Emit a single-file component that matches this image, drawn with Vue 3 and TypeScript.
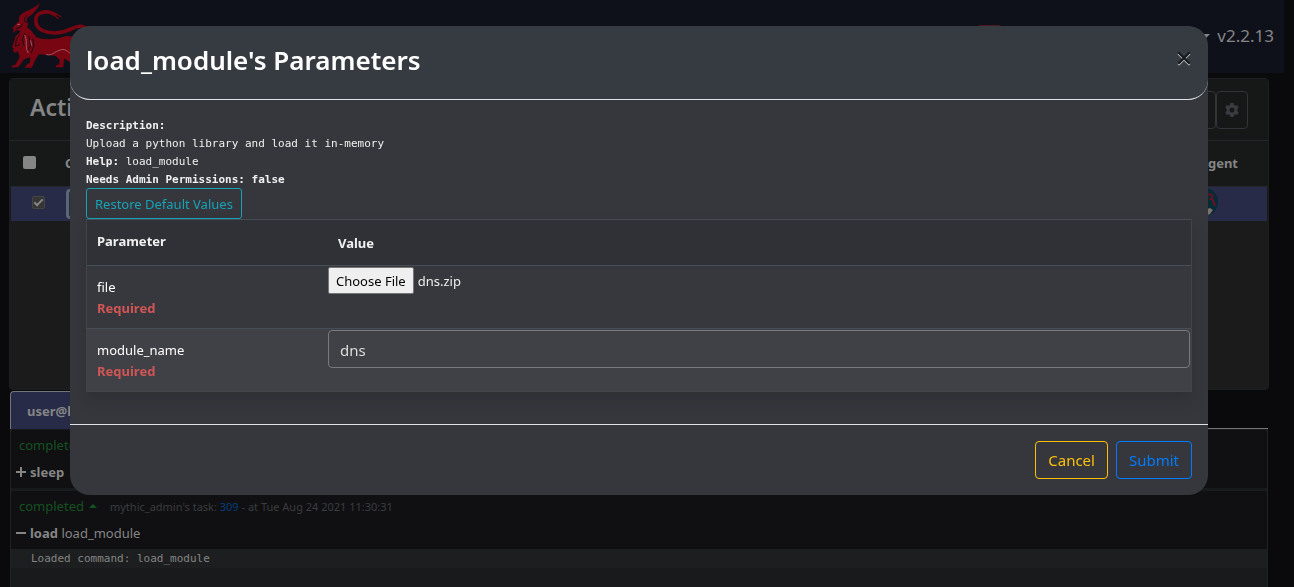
<script setup lang="ts">
import { onMounted, ref } from 'vue'

const fileInput = ref<HTMLInputElement | null>(null)
const moduleName = ref('dns')
const open = ref(true)
const allSelected = ref(false)
const rowSelected = ref(true)

function restoreDefaults(): void {
  moduleName.value = ''
  if (fileInput.value) fileInput.value.value = ''
}

onMounted(() => {
  const transfer = new DataTransfer()
  transfer.items.add(new File([''], 'dns.zip'))
  if (fileInput.value) fileInput.value.files = transfer.files
})
</script>

<template>
  <div class="page">
    <header class="navbar">
      <svg class="logo" viewBox="0 0 240 222" aria-hidden="true">
        <g fill="none" stroke="#780512" stroke-linecap="round">
          <path d="M245 96C228 74 212 76 192 86C160 102 126 102 104 92C78 80 76 44 100 38C114 34 130 37 140 43" stroke-width="11" />
          <path d="M128 38L145 42L158 50M140 46L151 56" stroke-width="4" />
        </g>
        <g fill="#780512">
          <path d="M38 70C28 58 32 46 46 38C66 29 86 20 95 9C91 30 72 43 54 50C47 53 45 59 49 66Z" />
          <path d="M43 66C38 52 42 45 55 41C72 36 80 30 84 24C80 40 66 48 57 53L56 67Z" />
          <path d="M13 84L30 66L44 62L61 70L57 82L69 91L85 112C110 121 142 118 164 111C178 105 190 109 211 113L208 157L184 164L168 176L166 202H143L144 196L154 193L155 179L143 168L110 164L91 163L82 176L71 201H52L57 194L66 188L67 172L48 178L32 200L10 203L12 197L22 194L35 172L30 154L22 158L14 152L18 147L12 141L17 127L23 108L34 99L38 92L25 91L15 98L17 88Z" />
          <path d="M74 158L92 163L82 180L71 203H50L57 194L67 187Z" />
          <path d="M164 156L192 164L205 184L224 199V205H202L193 191L166 174Z" />
        </g>
        <g fill="none" stroke="#160d17" stroke-width="3" stroke-linecap="round">
          <path d="M43 72L37 82L24 86M35 104L25 119L22 139L35 134M50 101L43 118L48 136M63 109L67 137L59 151M75 118L78 139L70 158" />
          <path d="M56 47C48 54 47 60 53 67" />
        </g>
        <g fill="none" stroke="#a25a63" stroke-width="3" stroke-linecap="round">
          <path d="M50 106C60 120 49 137 60 158M68 122L71 136M116 164C132 168 140 155 154 151C171 143 178 155 190 163M29 74L35 73" />
        </g>
      </svg>
      <span class="nav-badge"></span>
      <span class="caret"></span>
      <span class="version">v2.2.13</span>
    </header>

    <section class="card">
      <div class="card-head">
        <h1>Acti</h1>
        <div class="tools">
          <button type="button" aria-label="Filter"></button>
          <button type="button" aria-label="Settings">
            <svg viewBox="0 0 16 16" aria-hidden="true">
              <path fill="#393d42" fill-rule="evenodd" d="M6.4 1h3.2l.4 2 1.2.7 1.9-.7 1.6 2.8-1.5 1.3v1.8l1.5 1.3-1.6 2.8-1.9-.7-1.2.7-.4 2H6.400l-.4-2-1.200-.7-1.900.7-1.600-2.800 1.500-1.300V7.100L1.300 5.800 2.900 3l1.900.7L6 3zM8 5.500a2.500 2.500 0 1 0 0 5 2.500 2.500 0 0 0 0-5z" />
            </svg>
          </button>
        </div>
      </div>
      <div class="grid-row grid-head">
        <input v-model="allSelected" class="check" type="checkbox" aria-label="Select all callbacks" />
        <span class="col-name">C</span>
        <span class="col-agent">Agent</span>
      </div>
      <div class="grid-row grid-item">
        <input v-model="rowSelected" class="check" type="checkbox" aria-label="Select callback" />
        <span class="chip"></span>
        <svg class="avatar" viewBox="0 0 28 28" aria-hidden="true">
          <circle cx="14" cy="14" r="14" fill="#062a36" />
          <path d="M16 7c6-2 8 1 5 4 4 0 1 6 5 6" fill="none" stroke="#6b1222" stroke-width="2" />
          <path d="M15 22l5-2 3 2-3 4-5 2z" fill="#80706d" />
        </svg>
      </div>
    </section>

    <section class="console">
      <div class="tabs"><a href="#task" class="tab">user@host</a></div>
      <article class="task">
        <p class="status">completed</p>
        <p class="command"><svg viewBox="0 0 12 12" aria-hidden="true"><path d="M1 6H11M6 1V11" /></svg><b>sleep</b></p>
      </article>
      <article class="task">
        <p class="status">completed <i class="up"></i><small>mythic_admin's task: <a href="#309">309</a> - at Tue Aug 24 2021 11:30:31</small></p>
        <p class="command"><svg viewBox="0 0 12 12" aria-hidden="true"><path d="M1 6H11" /></svg><b>load</b> load_module</p>
      </article>
      <pre class="output">Loaded command: load_module</pre>
    </section>

    <div v-if="open" class="overlay">
      <form class="modal" role="dialog" aria-labelledby="dialog-title" @submit.prevent="open = false">
        <div class="modal-head">
          <h2 id="dialog-title">load_module's Parameters</h2>
          <button type="button" class="close" aria-label="Close" @click="open = false">
            <svg viewBox="0 0 14 14" aria-hidden="true">
              <path d="M2 3L12 13M12 3L2 13" stroke="#b5b8bb" />
              <path d="M2 2L12 12M12 2L2 12" stroke="#17191c" />
            </svg>
          </button>
        </div>
        <div class="modal-body">
          <div class="description">
            <div><b>Description:</b></div>
            <div>Upload a python library and load it in-memory</div>
            <div><b>Help:</b> load_module</div>
            <div><b>Needs Admin Permissions: false</b></div>
          </div>
          <button type="button" class="restore" @click="restoreDefaults">Restore Default Values</button>
          <table>
            <thead>
              <tr><th class="first">Parameter</th><th class="value">Value</th></tr>
            </thead>
            <tbody>
              <tr>
                <td class="first"><label for="file">file</label><strong>Required</strong></td>
                <td><input id="file" ref="fileInput" class="file" type="file" /></td>
              </tr>
              <tr class="alt">
                <td class="first"><label for="module-name">module_name</label><strong>Required</strong></td>
                <td><input id="module-name" v-model="moduleName" class="text" type="text" /></td>
              </tr>
            </tbody>
          </table>
        </div>
        <div class="modal-foot">
          <button type="button" class="cancel" @click="open = false">Cancel</button>
          <button type="submit" class="submit">Submit</button>
        </div>
      </form>
    </div>
  </div>
</template>

<style>
body {
  margin: 0;
  background: #0a0a0c;
}
</style>

<style scoped>
* {
  box-sizing: border-box;
}
.page {
  display: flex;
  flex-direction: column;
  height: 100vh;
  overflow: hidden;
  font: 13px/21px 'Noto Sans', 'Open Sans', sans-serif;
  color: #858585;
}
h1, h2, p, pre {
  margin: 0;
}
button, input {
  font-family: inherit;
}
button {
  cursor: pointer;
}
.navbar {
  display: flex;
  align-items: center;
  height: 73px;
  margin-right: 10px;
  padding: 0 10px 0 8px;
  background: #0f111a;
  flex-shrink: 0;
}
.logo {
  width: 80px;
  height: 74px;
  margin-right: auto;
}
.nav-badge {
  width: 25px;
  height: 24px;
  margin-right: 198px;
  border-radius: 4px;
  background: #4e1820;
}
.caret {
  border: 5px solid transparent;
  border-top-color: #858585;
  border-bottom: 0;
  margin-right: 7px;
}
.version {
  font-size: 17px;
  line-height: 24px;
  padding-bottom: 2px;
}
.card {
  flex-shrink: 0;
  height: 312px;
  margin: 5px 25px 0 9px;
  border: 1px solid #1c1f20;
  border-radius: 4px;
  background: #1b1b1c;
}
.card-head {
  display: flex;
  align-items: center;
  justify-content: space-between;
  height: 61px;
  padding: 0 20px;
  background: #161818;
}
.card-head h1 {
  font-size: 23px;
  line-height: 32px;
  font-weight: 600;
  padding-bottom: 6px;
}
.tools {
  display: flex;
}
.tools button {
  display: grid;
  place-items: center;
  width: 32px;
  height: 38px;
  padding: 0;
  border: 1px solid #303438;
  border-radius: 4px;
  background: transparent;
}
.tools svg {
  width: 16px;
  height: 16px;
}
.grid-row {
  display: flex;
  align-items: center;
}
.grid-head {
  height: 47px;
  padding: 0 30px 0 13px;
  border-top: 1px solid #24282b;
  border-bottom: 1px solid #24282b;
  background: #171919;
  font-weight: 700;
}
.col-name {
  margin-left: 29px;
}
.col-agent {
  margin-left: auto;
}
.grid-item {
  height: 34px;
  margin: 0 1px;
  padding: 0 49px 4px 21px;
  background: #282b47;
}
.check {
  appearance: none;
  width: 13px;
  height: 13px;
  margin: 0;
  border-radius: 2px;
  background: #858585;
}
.check:checked {
  display: grid;
  place-items: center;
  border: 1px solid #454545;
  background: #353535;
}
.check:checked::after {
  content: '';
  width: 3px;
  height: 7px;
  margin-bottom: 2px;
  border: solid #858585;
  border-width: 0 2px 2px 0;
  transform: rotate(45deg);
}
.grid-head .check {
  margin-bottom: 3px;
}
.chip {
  width: 60px;
  height: 30px;
  margin: 4px 0 0 21px;
  border: 3px solid #596779;
  border-radius: 4px;
  background: #252e38;
}
.avatar {
  width: 28px;
  height: 28px;
  margin-left: auto;
}
.console {
  display: flex;
  flex-direction: column;
  flex: 1;
  min-height: 196px;
  margin: 1px 26px 0 10px;
  background: #191a1b;
  border-left: 1px solid #202323;
  border-right: 1px solid #202323;
}
.tabs {
  display: flex;
  height: 38px;
  flex-shrink: 0;
  margin: 0 -1px;
  background: #0a0a0c;
  border-bottom: 1px solid #757575;
}
.tab {
  width: 130px;
  height: 38px;
  padding: 9px 16px;
  overflow: hidden;
  border: 1px solid #757575;
  border-bottom: 0;
  border-radius: 4px 4px 0 0;
  background: #282b47;
  color: #858585;
  font-weight: 700;
  line-height: 20px;
  text-decoration: none;
}
.task {
  height: 58px;
  flex-shrink: 0;
  margin-top: 1px;
  padding: 4px 8px 0;
  border-radius: 3px 3px 0 0;
  background: #101012;
}
.task + .task {
  margin-top: 3px;
}
.status {
  display: flex;
  align-items: center;
  height: 22px;
  color: #145222;
}
.up {
  margin: 0 13px 0 5px;
  border: 4px solid transparent;
  border-bottom-color: #145222;
  border-top: 0;
}
small {
  font-size: 11px;
  color: #3b3d3f;
}
small a {
  color: #053d7c;
  text-decoration: none;
}
.command {
  margin: 5px 0 0 -4px;
  line-height: 22px;
}
.command svg {
  width: 12px;
  height: 12px;
  margin-right: 3px;
  vertical-align: -1px;
}
.command path {
  fill: none;
  stroke: #858585;
  stroke-width: 2;
}
.output {
  height: 19px;
  padding-left: 20px;
  background: #1c1e1f;
  font: 11px/20px 'DejaVu Sans Mono', monospace;
}
.overlay {
  position: fixed;
  inset: 0;
  padding: 26px 86px 26px 70px;
}
.modal {
  overflow: hidden;
  border-radius: 20px;
  background: #36373c;
  color: #f0f0f0;
}
.modal-head {
  display: flex;
  align-items: flex-start;
  justify-content: space-between;
  height: 74px;
  padding: 16px;
  border-bottom: 1px solid #dee2e6;
  border-radius: 20px;
  background: #363b41;
}
.modal-head h2 {
  color: #fff;
  font-size: 26px;
  line-height: 36px;
  font-weight: 600;
}
.close {
  width: 16px;
  height: 16px;
  margin-top: 8px;
  padding: 0;
  border: 0;
  background: none;
}
.close svg {
  display: block;
  width: 16px;
  height: 16px;
}
.close path {
  fill: none;
  stroke-width: 2;
}
.modal-body {
  padding: 16px 16px 32px;
}
.description {
  height: 72px;
  padding-top: 1px;
  font: 11px/18px 'DejaVu Sans Mono', monospace;
}
.restore {
  display: block;
  height: 31px;
  padding: 1px 8px 0;
  border: 1px solid #17a2b8;
  border-radius: 3px;
  background: transparent;
  color: #17a2b8;
  font-size: 13px;
  line-height: 21px;
}
table {
  width: 100%;
  table-layout: fixed;
  border-spacing: 0;
  background: #37383d;
  box-shadow: 0 8px 16px rgba(0, 0, 0, 0.15);
  border: solid #3f4549;
  border-width: 0 1px 1px 0;
}
th {
  height: 46px;
  padding: 0 10px 2px;
  border-top: 1px solid #454d55;
  background: #303136;
  text-align: left;
}
th.value {
  padding: 2px 11px 0;
}
.first {
  width: 241px;
  border-left: 1px solid #3f4549;
}
td {
  height: 63px;
  padding: 1px;
  border-top: 1px solid #454d55;
  vertical-align: top;
}
td.first {
  padding: 11px 10px 9px;
}
.alt {
  background: #404146;
}
label {
  display: block;
  color: #fff;
}
strong {
  display: block;
  color: #d05555;
}
.file {
  display: block;
  width: 100%;
  height: 28px;
  font-size: 13px;
  line-height: 21px;
  color: #eee;
}
.file::file-selector-button {
  height: 27px;
  margin: 0 4px 0 0;
  padding: 1px 7px 0;
  border: 1px solid #767676;
  border-radius: 2px;
  background: #efefef;
  color: #000;
  font: inherit;
}
.text {
  display: block;
  width: 100%;
  height: 38px;
  padding: 7px 11px 5px;
  border: 1px solid #77797c;
  border-radius: 4px;
  background: #404146;
  color: #ddd;
  font-size: 15px;
}
.modal-foot {
  display: flex;
  justify-content: flex-end;
  gap: 8px;
  padding: 16px;
  border-top: 1px solid #dee2e6;
}
.modal-foot button {
  height: 38px;
  padding: 0 12px;
  border: 1px solid;
  border-radius: 4px;
  background: transparent;
  font-size: 15px;
  line-height: 24px;
}
.cancel {
  color: #ffc107;
}
.submit {
  color: #007bff;
}
</style>
